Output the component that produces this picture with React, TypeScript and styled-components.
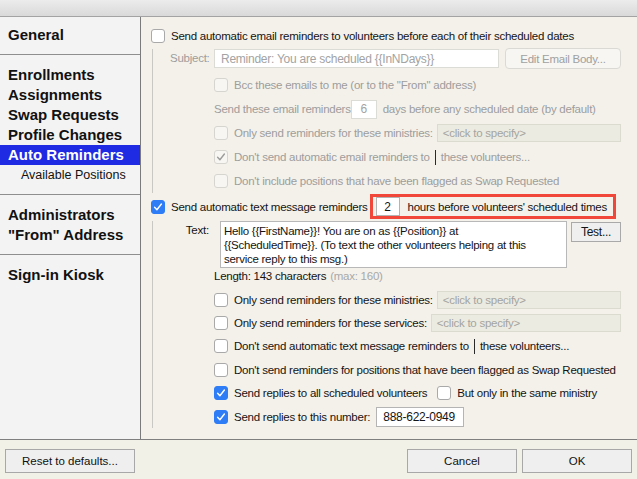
import React from "react";
import styled, { createGlobalStyle } from "styled-components";

const GlobalStyle = createGlobalStyle`
  html, body {
    margin: 0;
    padding: 0;
  }
  body {
    font-family: "Liberation Sans", Arial, sans-serif;
    background: #f4f1ea;
  }
`;

const Window = styled.div`
  width: 637px;
  height: 479px;
  display: flex;
  flex-direction: column;
  overflow: hidden;
`;

const TitleBar = styled.div`
  height: 16px;
  flex: none;
  background: linear-gradient(#ececec, #d9d9d9);
  border-bottom: 1px solid #a3a3a3;
`;

const Body = styled.div`
  flex: 1;
  display: flex;
  min-height: 0;
`;

// Left navigation
const Sidebar = styled.nav`
  width: 140px;
  flex: none;
  background: #f3f3f3;
  border-right: 1px solid #7b7b7b;
  font-size: 15px;
  font-weight: bold;
  color: #111;
`;

const NavGroup = styled.div<{ $first?: boolean }>`
  padding: ${(p) => (p.$first ? 8 : 10)}px 0 9px;
  border-bottom: 1px solid #8e8e8e;

  &:last-child {
    border-bottom: none;
  }
`;

const NavItem = styled.div<{ $active?: boolean; $sub?: boolean }>`
  height: 20px;
  line-height: 20px;
  padding-left: ${(p) => (p.$sub ? 21 : 8)}px;
  font-size: ${(p) => (p.$sub ? 12.5 : 15)}px;
  font-weight: ${(p) => (p.$sub ? "normal" : "bold")};
  background: ${(p) => (p.$active ? "#1f2be3" : "transparent")};
  color: ${(p) => (p.$active ? "#fff" : "#111")};
  white-space: nowrap;
`;

// Right settings panel
const Main = styled.main`
  flex: 1;
  min-width: 0;
  background: #f4f1ea;
  padding: 9px 16px 0 10px;
  font-size: 11.5px;
  letter-spacing: -0.25px;
  color: #141414;
`;

const Row = styled.div<{ $h?: number; $mt?: number; $dim?: boolean }>`
  display: flex;
  align-items: center;
  height: ${(p) => p.$h ?? 24}px;
  margin-top: ${(p) => p.$mt ?? 0}px;
  color: ${(p) => (p.$dim ? "#9d9d9d" : "#141414")};
  white-space: nowrap;
`;

const Group = styled.div<{ $mt?: number }>`
  margin-left: 1px;
  margin-top: ${(p) => p.$mt ?? 0}px;
  border-left: 1px solid #c9c8c2;
  padding-left: 61px;
`;

const FieldRow = styled.div<{ $mt?: number; $dim?: boolean }>`
  display: flex;
  align-items: flex-start;
  margin-left: -44px;
  margin-top: ${(p) => p.$mt ?? 0}px;
  color: ${(p) => (p.$dim ? "#9d9d9d" : "#141414")};
  white-space: nowrap;
`;

const FieldLabel = styled.span<{ $top?: number }>`
  width: 44px;
  box-sizing: border-box;
  padding-right: 5px;
  padding-top: ${(p) => p.$top ?? 0}px;
  text-align: right;
  line-height: ${(p) => (p.$top ? 14 : 19)}px;
`;

const Box = styled.span<{ $checked?: boolean; $disabled?: boolean }>`
  width: 14px;
  height: 14px;
  flex: none;
  box-sizing: border-box;
  border-radius: 3px;
  display: inline-flex;
  align-items: center;
  justify-content: center;
  margin-right: 6px;
  background: ${(p) => (p.$checked && !p.$disabled ? "#2f7df6" : p.$disabled ? "#f7f6f2" : "#fff")};
  border: 1px solid
    ${(p) => (p.$checked && !p.$disabled ? "#2f7df6" : p.$disabled ? "#d6d5cf" : "#a9a9a9")};
`;

const Gap = styled.span<{ $w: number }>`
  display: inline-block;
  width: ${(p) => p.$w}px;
  flex: none;
`;

const TextInput = styled.span<{ $w: number; $h?: number; $dim?: boolean; $center?: boolean }>`
  display: inline-flex;
  align-items: center;
  justify-content: ${(p) => (p.$center ? "center" : "flex-start")};
  box-sizing: border-box;
  width: ${(p) => p.$w}px;
  height: ${(p) => p.$h ?? 19}px;
  flex: none;
  padding: 0 ${(p) => (p.$center ? 0 : 6)}px;
  background: #fff;
  border: 1px solid ${(p) => (p.$dim ? "#dcdcd6" : "#b4b4b4")};
  color: ${(p) => (p.$dim ? "#a3a3a3" : "#141414")};
  font-size: 12px;
`;

const SpecifyField = styled.span`
  flex: 1;
  height: 18px;
  box-sizing: border-box;
  display: flex;
  align-items: center;
  padding-left: 5px;
  margin-left: 4px;
  background: #ecebe1;
  border: 1px solid #dcdbd0;
  color: #a4a4a0;
`;

const Bar = styled.span`
  width: 1px;
  height: 15px;
  background: #2a2a2a;
  margin: 0 5px 0 5px;
  flex: none;
`;

const SoftButton = styled.span`
  display: inline-flex;
  align-items: center;
  justify-content: center;
  box-sizing: border-box;
  width: 118px;
  height: 21px;
  margin-left: 6px;
  margin-top: -1px;
  border: 1px solid #dad9d3;
  border-radius: 4px;
  background: #f7f6f2;
  color: #a0a0a0;
`;

const Highlight = styled.span`
  display: inline-flex;
  align-items: center;
  height: 25px;
  box-sizing: border-box;
  border: 3px solid #f0473a;
  padding: 0 6px 0 3px;
  margin-left: 2px;
`;

const MessageBox = styled.div`
  width: 348px;
  height: 47px;
  margin-left: 6px;
  box-sizing: border-box;
  padding: 2px 3px;
  background: #fff;
  border: 1px solid #b8b8b8;
  line-height: 14px;
  font-size: 11.5px;
  white-space: pre-line;
`;

const TestButton = styled.span`
  display: inline-flex;
  align-items: center;
  justify-content: center;
  box-sizing: border-box;
  width: 50px;
  height: 20px;
  margin: 1px 0 0 4px;
  background: #efefef;
  border: 1px solid #a9a9a9;
  font-size: 12px;
`;

const Muted = styled.span`
  color: #a8a8a8;
  margin-left: 4px;
`;

// Bottom button bar
const Footer = styled.footer`
  height: 39px;
  flex: none;
  display: flex;
  align-items: center;
  gap: 5px;
  padding: 0 5px;
  background: #f1f1e7;
  border-top: 1px solid #7f7f7f;
  font-size: 11.5px;
  letter-spacing: -0.2px;
`;

const FooterButton = styled.button<{ $w: number }>`
  width: ${(p) => p.$w}px;
  height: 24px;
  margin-top: 2px;
  background: #efefef;
  border: 1px solid #a8a8a8;
  border-radius: 0;
  font: inherit;
  color: #111;
  padding: 0;
`;

const Spacer = styled.span`
  flex: 1;
`;

type CheckProps = { checked?: boolean; disabled?: boolean };

const Check: React.FC<CheckProps> = ({ checked, disabled }) => (
  <Box $checked={checked} $disabled={disabled}>
    {checked && (
      <svg width="10" height="10" viewBox="0 0 10 10">
        <path
          d="M1.6 5.3 L3.9 7.7 L8.4 2"
          fill="none"
          stroke={disabled ? "#9c9c9c" : "#fff"}
          strokeWidth="1.4"
          strokeLinecap="round"
          strokeLinejoin="round"
        />
      </svg>
    )}
  </Box>
);

const message =
  "Hello {{FirstName}}! You are on as {{Position}} at\n{{ScheduledTime}}. (To text the other volunteers helping at this\nservice reply to this msg.)";

const App: React.FC = () => {
  return (
    <>
      <GlobalStyle />
      <Window>
        <TitleBar />
        <Body>
          <Sidebar>
            <NavGroup $first>
              <NavItem>General</NavItem>
            </NavGroup>
            <NavGroup>
              <NavItem>Enrollments</NavItem>
              <NavItem>Assignments</NavItem>
              <NavItem>Swap Requests</NavItem>
              <NavItem>Profile Changes</NavItem>
              <NavItem $active>Auto Reminders</NavItem>
              <NavItem $sub>Available Positions</NavItem>
            </NavGroup>
            <NavGroup>
              <NavItem>Administrators</NavItem>
              <NavItem>"From" Address</NavItem>
            </NavGroup>
            <NavGroup>
              <NavItem>Sign-in Kiosk</NavItem>
            </NavGroup>
          </Sidebar>

          <Main>
            <Row $h={20}>
              <Check />
              Send automatic email reminders to volunteers before each of their scheduled dates
            </Row>

            <Group $mt={3}>
              <FieldRow $dim>
                <FieldLabel>Subject:</FieldLabel>
                <TextInput $w={285} $dim>
                  Reminder: You are scheduled {"{{InNDays}}"}
                </TextInput>
                <SoftButton>Edit Email Body...</SoftButton>
              </FieldRow>
              <Row $dim $mt={4}>
                <Check disabled />
                Bcc these emails to me (or to the "From" address)
              </Row>
              <Row $dim>
                Send these email reminders
                <TextInput $w={26} $dim $center>
                  6
                </TextInput>
                <Gap $w={6} />
                days before any scheduled date (by default)
              </Row>
              <Row $dim>
                <Check disabled />
                Only send reminders for these ministries:
                <SpecifyField>&lt;click to specify&gt;</SpecifyField>
              </Row>
              <Row $dim>
                <Check disabled checked />
                Don't send automatic email reminders to
                <Bar />
                these volunteers...
              </Row>
              <Row $dim>
                <Check disabled />
                Don't include positions that have been flagged as Swap Requested
              </Row>
            </Group>

            <Row $h={25} $mt={1}>
              <Check checked />
              Send automatic text message reminders
              <Highlight>
                <TextInput $w={24} $center>
                  2
                </TextInput>
                <Gap $w={8} />
                hours before volunteers' scheduled times
              </Highlight>
            </Row>

            <Group $mt={2}>
              <FieldRow>
                <FieldLabel $top={2}>Text:</FieldLabel>
                <MessageBox>{message}</MessageBox>
                <TestButton>Test...</TestButton>
              </FieldRow>
              <Row $h={16}>
                Length: 143 characters<Muted>(max: 160)</Muted>
              </Row>
              <Row $h={23.4} $mt={4}>
                <Check />
                Only send reminders for these ministries:
                <SpecifyField>&lt;click to specify&gt;</SpecifyField>
              </Row>
              <Row $h={23.4}>
                <Check />
                Only send reminders for these services:
                <SpecifyField>&lt;click to specify&gt;</SpecifyField>
              </Row>
              <Row $h={23.4}>
                <Check />
                Don't send automatic text message reminders to
                <Bar />
                these volunteers...
              </Row>
              <Row $h={23.4}>
                <Check />
                Don't send reminders for positions that have been flagged as Swap Requested
              </Row>
              <Row $h={23.4}>
                <Check checked />
                Send replies to all scheduled volunteers
                <Gap $w={10} />
                <Check />
                But only in the same ministry
              </Row>
              <Row $h={23.4}>
                <Check checked />
                Send replies to this number:
                <Gap $w={6} />
                <TextInput $w={88} $h={20}>
                  888-622-0949
                </TextInput>
              </Row>
            </Group>
          </Main>
        </Body>

        <Footer>
          <FooterButton $w={130}>Reset to defaults...</FooterButton>
          <Spacer />
          <FooterButton $w={110}>Cancel</FooterButton>
          <FooterButton $w={110}>OK</FooterButton>
        </Footer>
      </Window>
    </>
  );
};

export default App;
